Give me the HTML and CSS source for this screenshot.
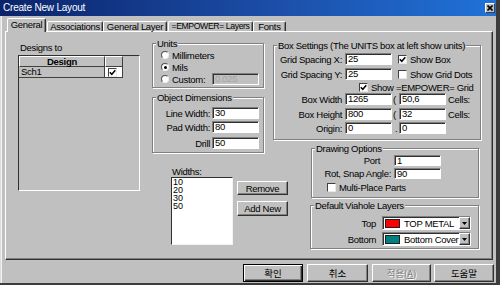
FILE: index.html
```html
<!DOCTYPE html>
<html lang="en">
<head>
<meta charset="utf-8">
<title>Create New Layout</title>
<link rel="stylesheet" href="styles.css">
</head>
<body>
<div class="window">
  <div class="titlebar">
    <span class="title">Create New Layout</span>
    <span class="close"><svg width="6" height="6" viewBox="0 0 6 6"><path d="M0.5 0.5L5.5 5.5M5.5 0.5L0.5 5.5" stroke="#000" stroke-width="1.6"/></svg></span>
  </div>
  <div class="client">
    <div class="tabs">
      <div class="tab tab-sel w-general">General</div>
      <div class="tab w-assoc">Associations</div>
      <div class="tab w-glayer">General Layer</div>
      <div class="tab w-emp">=EMPOWER= Layers</div>
      <div class="tab w-fonts">Fonts</div>
    </div>
    <div class="panel">
      <div class="col1">
        <div class="designs-lbl">Designs to</div>
        <div class="dbox">
          <div class="drow">
            <div class="hcell hc1">Design</div>
            <div class="hcell hc2"></div>
          </div>
          <div class="drow">
            <div class="cell c1">Sch1</div>
            <div class="cell c2"><span class="chk"><svg width="7" height="7" viewBox="0 0 7 7"><path d="M0.8 3.2L2.8 5.3L6.3 1.2" fill="none" stroke="#000" stroke-width="1.5"/></svg></span></div>
          </div>
        </div>
      </div>

      <div class="col2">
        <div class="grp units">
          <div class="lg">Units</div>
          <div class="rrow"><span class="rb"></span><span>Millimeters</span></div>
          <div class="rrow"><span class="rb"><span class="dot"></span></span><span>Mils</span></div>
          <div class="rrow"><span class="rb"></span><span>Custom:</span><span class="inp dis custom">0.025</span></div>
        </div>
        <div class="grp odim">
          <div class="lg">Object Dimensions</div>
          <div class="frow r-a"><span class="flabel">Line Width:</span><span class="inp">30</span></div>
          <div class="frow r-b"><span class="flabel">Pad Width:</span><span class="inp">80</span></div>
          <div class="frow r-a"><span class="flabel">Drill</span><span class="inp">50</span></div>
        </div>
        <div class="widths">
          <div class="wl">
            <div class="wlabel">Widths:</div>
            <div class="list">
              <div>10</div><div>20</div><div>30</div><div>50</div>
            </div>
          </div>
          <div class="wbtns">
            <div class="btn b-remove">Remove</div>
            <div class="btn b-add">Add New</div>
          </div>
        </div>
      </div>

      <div class="col3">
        <div class="grp boxset">
          <div class="lg">Box Settings (The UNITS box at left show units)</div>
          <div class="brow m2"><span class="blabel">Grid Spacing X:</span><span class="inp">25</span><span class="chk ck-a"><svg width="7" height="7" viewBox="0 0 7 7"><path d="M0.8 3.2L2.8 5.3L6.3 1.2" fill="none" stroke="#000" stroke-width="1.5"/></svg></span><span class="cktext">Show Box</span></div>
          <div class="brow m3"><span class="blabel">Grid Spacing Y:</span><span class="inp">25</span><span class="chk ck-a"></span><span class="cktext">Show Grid Dots</span></div>
          <div class="brow m2 h11"><span class="chk ck-b"><svg width="7" height="7" viewBox="0 0 7 7"><path d="M0.8 3.2L2.8 5.3L6.3 1.2" fill="none" stroke="#000" stroke-width="1.5"/></svg></span><span class="cktext">Show =EMPOWER= Grid</span></div>
          <div class="brow"><span class="blabel">Box Width</span><span class="inp">1265</span><span class="sep">(</span><span class="inp">50,6</span><span class="cells">Cells:</span></div>
          <div class="brow m3"><span class="blabel">Box Height</span><span class="inp">800</span><span class="sep">(</span><span class="inp">32</span><span class="cells">Cells:</span></div>
          <div class="brow m2"><span class="blabel">Origin:</span><span class="inp">0</span><span class="sep sep-c">.</span><span class="inp">0</span></div>
        </div>
        <div class="grp drawopt">
          <div class="lg">Drawing Options</div>
          <div class="drow2 m1"><span class="dlabel pad-port">Port</span><span class="inp inp11">1</span></div>
          <div class="drow2 m2"><span class="dlabel">Rot, Snap Angle:</span><span class="inp inp11">90</span></div>
          <div class="drow2 m3"><span class="chk ck-c"></span><span class="cktext">Multi-Place Parts</span></div>
        </div>
        <div class="grp via">
          <div class="lg">Default Viahole Layers</div>
          <div class="vrow m5"><span class="vlabel">Top</span><span class="combo"><span class="sw sw-red"></span><span class="ctext">TOP METAL</span><span class="dd"><svg width="5" height="3" viewBox="0 0 5 3"><path d="M0 0H5L2.5 3Z" fill="#000"/></svg></span></span></div>
          <div class="vrow m2"><span class="vlabel">Bottom</span><span class="combo"><span class="sw sw-teal"></span><span class="ctext">Bottom Cover</span><span class="dd"><svg width="5" height="3" viewBox="0 0 5 3"><path d="M0 0H5L2.5 3Z" fill="#000"/></svg></span></span></div>
        </div>
      </div>
    </div>
    <div class="dlgbtns">
      <div class="kbtn kdef w60">확인</div>
      <div class="kbtn w61">취소</div>
      <div class="kbtn kdis w59">적용(<u>A</u>)</div>
      <div class="kbtn w60 g3">도움말</div>
    </div>
  </div>
</div>
</body>
</html>
```

FILE: styles.css
```css
* { box-sizing: border-box; }
html, body { margin: 0; padding: 0; }
body {
  width: 500px; height: 285px; overflow: hidden;
  background: #c0c0c0;
  font-family: "Liberation Sans", Arial, sans-serif;
  font-size: 9.5px; letter-spacing: -0.3px; color: #000;
}
.window {
  width: 500px; height: 285px;
  background: #c0c0c0;
  border-right: 4px solid #3c3c3c;
  border-bottom: 2px solid #3c3c3c;
  display: flex; flex-direction: column;
}
.titlebar {
  height: 16px; flex: none;
  display: flex; align-items: center;
  padding-left: 3px;
  background: linear-gradient(to right, #0a246a 0%, #1c4ea8 55%, #1f72d8 100%);
  color: #fff; line-height: 16px;
}
.title { font-size: 10px; letter-spacing: -0.2px; }
.close {
  margin-left: auto; margin-right: 1px;
  width: 10px; height: 10px;
  background: #c0c0c0;
  border: 1px solid; border-color: #fff #404040 #404040 #fff;
  display: flex; align-items: center; justify-content: center;
}
.client {
  flex: 1;
  padding: 2px 0 0 5px;
  box-shadow: inset 1px 0 #dcdcdc, inset 2px 0 #f4f4f4;
}
.tabs {
  display: flex; align-items: flex-end;
  height: 14px; margin-bottom: -1px;
  position: relative; z-index: 1;
}
.tab {
  height: 10px; margin-bottom: 1px;
  border-top: 1px solid #fff; border-left: 1px solid #fff; border-right: 1px solid #303030;
  box-shadow: inset -1px 0 #808080;
  border-radius: 2px 2px 0 0;
  background: #c0c0c0;
  text-align: center; line-height: 9px; white-space: nowrap;
}
.tab-sel { height: 14px; margin-bottom: 0; line-height: 11px; }
.w-general { margin-left: 2px; width: 39px; }
.w-assoc { margin-left: 1px; width: 56px; }
.w-glayer { width: 64px; }
.w-emp { margin-left: 1px; width: 85px; font-size: 8.7px; letter-spacing: -0.4px; }
.w-fonts { width: 33px; }

.panel {
  width: 488px; height: 229px;
  border-top: 1px solid #fff; border-left: 1px solid #fff;
  border-right: 1px solid #303030; border-bottom: 1px solid #303030;
  box-shadow: inset -1px -1px #808080;
  display: flex; align-items: flex-start;
}
.col1 { margin-left: 12px; width: 122px; padding-top: 9px; flex: none; }
.col2 { margin-left: 12px; width: 112px; padding-top: 11px; flex: none; }
.col3 { margin-left: 9px; width: 208px; padding-top: 13px; flex: none; }

.designs-lbl { line-height: 13px; padding-left: 2px; }
.dbox {
  margin-top: 1px; height: 136px;
  border: 1px solid; border-color: #303030 #fff #fff #303030;
}
.drow { display: flex; height: 11px; }
.hcell {
  border: 1px solid; border-color: #fff #404040 #404040 #fff;
  line-height: 9px;
}
.hc1 { width: 86px; text-align: center; font-weight: bold; }
.hc2 { width: 18px; }
.cell { border-right: 1px solid #404040; border-bottom: 1px solid #404040; }
.c1 { width: 86px; padding-left: 2px; line-height: 10px; }
.c2 { width: 18px; background: #fff; display: flex; align-items: center; padding-left: 3px; }

.chk {
  width: 9px; height: 9px; flex: none;
  background: #fff;
  border: 1px solid; border-color: #404040 #e8e8e8 #e8e8e8 #404040;
  display: flex; align-items: center; justify-content: center;
}
.chk svg { display: block; }
.cktext { margin-left: 3px; white-space: nowrap; line-height: 11px; }

.grp {
  border: 1px solid #808080;
  box-shadow: inset 1px 1px #fff, 1px 1px #fff;
}
.lg {
  display: table;
  margin: -6px 0 0 3px; padding: 0 1px;
  height: 11px; line-height: 11px;
  background: #c0c0c0; white-space: nowrap;
}
.units { height: 45px; }
.rrow { display: flex; align-items: center; height: 12px; padding-left: 8px; }
.rb {
  width: 8px; height: 8px; border-radius: 50%; flex: none;
  background: #fff;
  border: 1px solid; border-color: #505050 #f0f0f0 #f0f0f0 #505050;
  margin-right: 3px;
  display: flex; align-items: center; justify-content: center;
}
.dot { width: 3px; height: 3px; border-radius: 50%; background: #000; }
.inp {
  display: block; flex: none;
  width: 47px; height: 12px;
  background: #fff;
  border: 1px solid; border-color: #808080 #fff #fff #808080;
  box-shadow: inset 1px 1px #303030;
  padding-left: 2px; line-height: 10px; white-space: nowrap;
}
.inp11 { height: 11px; line-height: 9px; }
.dis { background: #c0c0c0; color: #a4a4a4; }
.custom { margin-left: auto; margin-right: 4px; }

.odim { margin-top: 9px; padding-bottom: 3px; }
.frow { display: flex; align-items: center; height: 12px; }
.r-a { margin-top: 4px; }
.r-b { margin-top: 2px; }
.flabel { width: 59px; text-align: right; padding-right: 2px; white-space: nowrap; }

.widths { display: flex; width: max-content; margin-top: 13px; margin-left: 19px; }
.wl { width: 62px; flex: none; }
.wlabel { line-height: 11px; padding-left: 1px; }
.list {
  height: 68px; background: #fff;
  border: 1px solid; border-color: #303030 #f4f4f4 #f4f4f4 #303030;
  padding-left: 1px;
  font-size: 9px; letter-spacing: 0; line-height: 8px;
}
.wbtns { margin-left: 4px; padding-top: 15px; flex: none; }
.btn {
  width: 51px;
  display: flex; align-items: center; justify-content: center;
  background: #c0c0c0;
  border: 1px solid; border-color: #fff #303030 #303030 #fff;
  box-shadow: inset -1px -1px #808080;
}
.b-remove { height: 14px; }
.b-add { height: 15px; margin-top: 6px; }

.boxset { padding-bottom: 5px; }
.brow { display: flex; align-items: center; height: 12px; }
.h11 { height: 11px; }
.m1 { margin-top: 1px; }
.m2 { margin-top: 2px; }
.m3 { margin-top: 3px; }
.m5 { margin-top: 5px; }
.blabel { width: 71px; text-align: right; padding-right: 3px; white-space: nowrap; flex: none; }
.ck-a { margin-left: 6px; }
.ck-b { margin-left: 85px; }
.sep { width: 7px; padding-left: 1px; flex: none; }
.sep-c { padding-left: 3px; }
.cells { margin-left: 2px; }

.drawopt { margin-top: 8px; margin-left: 38px; width: 168px; padding-bottom: 4px; }
.drow2 { display: flex; align-items: center; height: 11px; }
.dlabel { width: 82px; text-align: right; padding-right: 3px; white-space: nowrap; flex: none; }
.pad-port { padding-right: 14px; }
.ck-c { margin-left: 15px; }

.via { margin-top: 7px; margin-left: 37px; width: 169px; padding-bottom: 2px; }
.vrow { display: flex; align-items: center; height: 14px; }
.vlabel { width: 71px; text-align: right; padding-right: 6px; flex: none; }
.combo {
  width: 89px; height: 14px; flex: none;
  background: #fff;
  border: 1px solid; border-color: #808080 #fff #fff #808080;
  box-shadow: inset 1px 1px #303030;
  display: flex; align-items: center;
  padding-left: 2px;
}
.sw { width: 15px; height: 9px; border: 1px solid #202020; flex: none; }
.sw-red { background: #ff0000; }
.sw-teal { background: #008080; }
.ctext { margin-left: 4px; white-space: nowrap; line-height: 11px; }
.dd {
  margin-left: auto; width: 11px; height: 12px; flex: none;
  background: #c0c0c0;
  border: 1px solid; border-color: #fff #303030 #303030 #fff;
  box-shadow: inset -1px -1px #808080;
  display: flex; align-items: center; justify-content: center;
}
.dd svg { display: block; }

.dlgbtns { display: flex; justify-content: flex-end; margin-top: 4px; padding-right: 2px; }
.kbtn {
  height: 18px;
  display: flex; align-items: center; justify-content: center;
  background: #c0c0c0;
  border: 1px solid; border-color: #fff #303030 #303030 #fff;
  box-shadow: inset -1px -1px #808080;
  font-family: "Noto Sans CJK KR", "Liberation Sans", sans-serif;
  font-size: 9.5px; letter-spacing: 0;
  margin-left: 4px;
}
.kdef {
  border-color: #000;
  box-shadow: inset 1px 1px #fff, inset -1px -1px #303030, inset -2px -2px #808080;
}
.kdis { color: #808080; text-shadow: 1px 1px 0 #fff; }
.w60 { width: 60px; }
.w61 { width: 61px; }
.w59 { width: 59px; }
.g3 { margin-left: 3px; }
```
